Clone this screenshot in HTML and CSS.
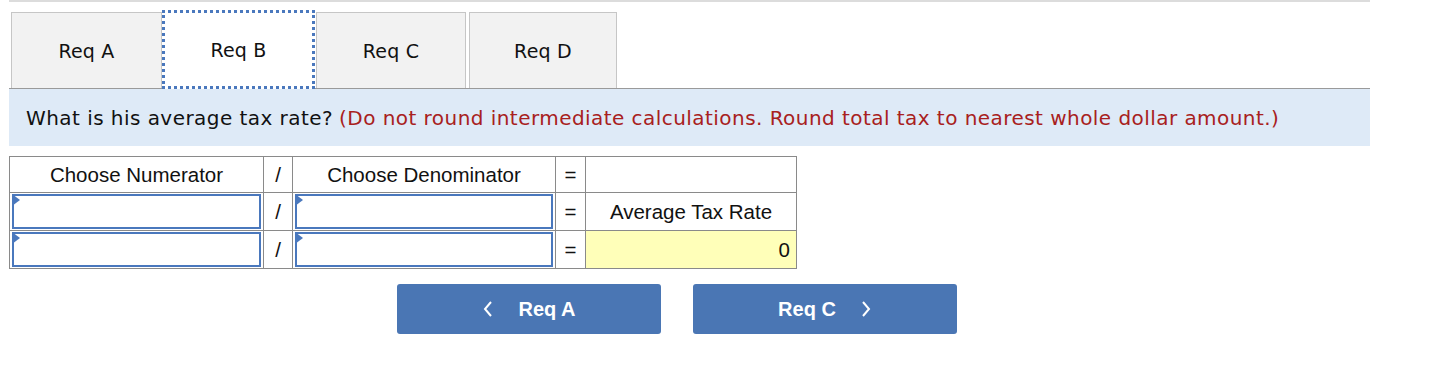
FILE: index.html
```html
<!DOCTYPE html>
<html lang="en">
<head>
    <meta charset="UTF-8">
    <title>Average Tax Rate</title>
    <link rel="stylesheet" href="styles.css">
</head>
<body>
    <div class="page">
        <div class="top-rule"></div>

        <div class="tabs">
            <div class="tab tab-a">Req A</div>
            <div class="tab tab-active">Req B</div>
            <div class="tab tab-c">Req C</div>
            <div class="tab tab-d">Req D</div>
        </div>

        <div class="question">
            What is his average tax rate? <span class="hint">(Do not round intermediate calculations. Round total tax to nearest whole dollar amount.)</span>
        </div>

        <table class="ratio-table">
            <colgroup>
                <col class="col-num">
                <col class="col-op">
                <col class="col-den">
                <col class="col-eq">
                <col class="col-res">
            </colgroup>
            <tr>
                <td>Choose Numerator</td>
                <td>/</td>
                <td>Choose Denominator</td>
                <td>=</td>
                <td></td>
            </tr>
            <tr>
                <td class="cell-input"><div class="pick"></div></td>
                <td>/</td>
                <td class="cell-input"><div class="pick"></div></td>
                <td>=</td>
                <td>Average Tax Rate</td>
            </tr>
            <tr>
                <td class="cell-input"><div class="pick"></div></td>
                <td>/</td>
                <td class="cell-input"><div class="pick"></div></td>
                <td>=</td>
                <td class="result">0</td>
            </tr>
        </table>

        <div class="nav">
            <button class="nav-btn">
                <svg class="chev" width="12" height="18" viewBox="0 0 12 18"><polyline points="9,2 3,9 9,16" /></svg>
                <span>Req A</span>
            </button>
            <button class="nav-btn">
                <span>Req C</span>
                <svg class="chev" width="12" height="18" viewBox="0 0 12 18"><polyline points="3,2 9,9 3,16" /></svg>
            </button>
        </div>
    </div>
</body>
</html>
```

FILE: styles.css
```css
body {
    margin: 0;
    background: #ffffff;
    font-family: "DejaVu Sans", Verdana, sans-serif;
    color: #111;
}
.page {
    width: 1361px;
    margin-left: 9px;
}
.top-rule {
    height: 2px;
    background: #dcdcdc;
}
.tabs {
    display: flex;
    align-items: flex-end;
    height: 86px;
    border-bottom: 1px solid #9a9a9a;
}
.tab {
    box-sizing: border-box;
    height: 76px;
    background: #f2f2f2;
    border: 1px solid #c6c6c6;
    border-bottom: none;
    display: flex;
    align-items: center;
    justify-content: center;
    font-size: 19px;
    letter-spacing: 0.2px;
}
.tab-a {
    width: 151px;
    margin-left: 2px;
}
.tab-active {
    width: 153px;
    height: 79px;
    margin-bottom: -1px;
    background: #ffffff;
    border: 3px dotted #4a78bd;
}
.tab-c {
    width: 150px;
    margin-left: 1px;
}
.tab-d {
    width: 148px;
    margin-left: 3px;
}
.question {
    height: 57px;
    background: #deeaf7;
    padding-left: 17px;
    display: flex;
    align-items: center;
    font-size: 20px;
    letter-spacing: 0.45px;
}
.hint {
    color: #a82020;
    margin-left: 6px;
}
.ratio-table {
    margin-top: 10px;
    border-collapse: collapse;
    table-layout: fixed;
    width: 787px;
    font-family: "Liberation Sans", Arial, sans-serif;
    font-size: 20.5px;
    color: #111;
}
.col-num { width: 254px; }
.col-op { width: 29px; }
.col-den { width: 263px; }
.col-eq { width: 30px; }
.col-res { width: 211px; }
.ratio-table td {
    border: 1px solid #8a8a8a;
    height: 35px;
    padding: 0;
    text-align: center;
}
.ratio-table td.result {
    background: #ffffb9;
    text-align: right;
    padding-right: 6px;
}
.ratio-table td.cell-input {
    padding: 1px 2px;
}
.pick {
    position: relative;
    box-sizing: border-box;
    height: 35px;
    border: 2px solid #4a78bd;
    background: #fff;
}
.pick::before {
    content: "";
    position: absolute;
    left: -2px;
    top: -2px;
    border-left: 8px solid #4a78bd;
    border-top: 6px solid transparent;
    border-bottom: 6px solid transparent;
}
.nav {
    display: flex;
    gap: 32px;
    padding-left: 388px;
    margin-top: 15px;
}
.nav-btn {
    width: 264px;
    height: 50px;
    border: none;
    border-radius: 3px;
    background: #4a76b4;
    color: #fff;
    font-family: "Liberation Sans", Arial, sans-serif;
    font-weight: 700;
    font-size: 20px;
    display: flex;
    align-items: center;
    justify-content: center;
    gap: 24px;
}
.chev {
    fill: none;
    stroke: #fff;
    stroke-width: 2;
}
```
